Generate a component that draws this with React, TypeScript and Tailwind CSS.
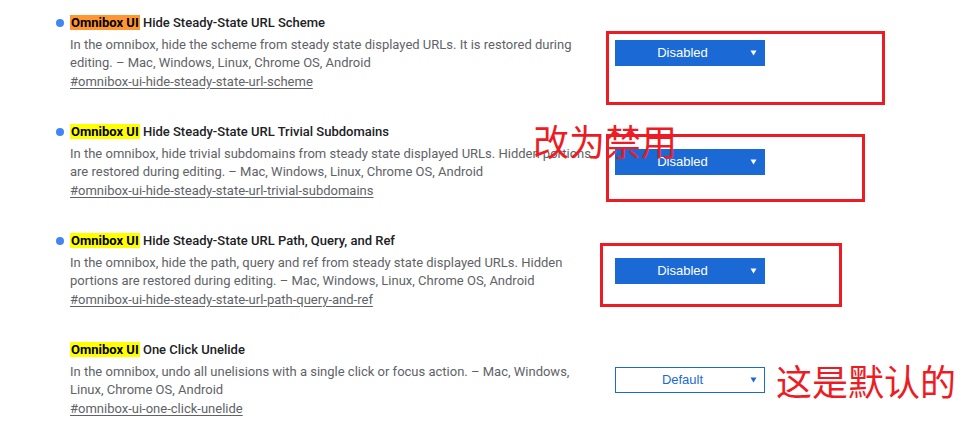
import React from 'react';

type Flag = {
  name: string;
  lines: string[];
  anchor: string;
  value: 'Disabled' | 'Default';
  modified: boolean;
  activeMatch?: boolean;
};

const flags: Flag[] = [
  {
    name: 'Hide Steady-State URL Scheme',
    lines: [
      'In the omnibox, hide the scheme from steady state displayed URLs. It is restored during',
      'editing. – Mac, Windows, Linux, Chrome OS, Android',
    ],
    anchor: '#omnibox-ui-hide-steady-state-url-scheme',
    value: 'Disabled',
    modified: true,
    activeMatch: true,
  },
  {
    name: 'Hide Steady-State URL Trivial Subdomains',
    lines: [
      'In the omnibox, hide trivial subdomains from steady state displayed URLs. Hidden portions',
      'are restored during editing. – Mac, Windows, Linux, Chrome OS, Android',
    ],
    anchor: '#omnibox-ui-hide-steady-state-url-trivial-subdomains',
    value: 'Disabled',
    modified: true,
  },
  {
    name: 'Hide Steady-State URL Path, Query, and Ref',
    lines: [
      'In the omnibox, hide the path, query and ref from steady state displayed URLs. Hidden',
      'portions are restored during editing. – Mac, Windows, Linux, Chrome OS, Android',
    ],
    anchor: '#omnibox-ui-hide-steady-state-url-path-query-and-ref',
    value: 'Disabled',
    modified: true,
  },
  {
    name: 'One Click Unelide',
    lines: [
      'In the omnibox, undo all unelisions with a single click or focus action. – Mac, Windows,',
      'Linux, Chrome OS, Android',
    ],
    anchor: '#omnibox-ui-one-click-unelide',
    value: 'Default',
    modified: false,
  },
];

const FlagSelect = ({ value }: { value: Flag['value'] }) => {
  const isSet = value !== 'Default';
  return (
    <div
      className={`mt-[26px] flex h-[26px] w-[150px] shrink-0 items-center border pl-2 pr-[7px] text-[13px] ${
        isSet ? 'border-[#1b69d4] bg-[#1b69d4] text-white' : 'border-[#1a6ad6] bg-white text-[#1a6ad6]'
      }`}
      style={{ fontFamily: '"Liberation Sans", Arial, sans-serif' }}
    >
      <span className="flex-1 text-center">{value}</span>
      <svg width="7" height="6" viewBox="0 0 7 6" className="ml-[9px]">
        <path d="M0.5 0.5h6L3.5 5.5z" fill={isSet ? '#ffffff' : '#1a6ad6'} />
      </svg>
    </div>
  );
};

const FlagRow = ({ flag }: { flag: Flag }) => (
  <div className="flex h-[109px]">
    <div className="flex w-[559px] shrink-0">
      <div className="flex h-[18px] w-[14px] shrink-0 items-center">
        {flag.modified && <div className="h-2 w-2 rounded-full bg-[#4285f4]" />}
      </div>
      <div className="flex flex-col">
        <div className="h-[18px] text-[13px] font-medium leading-[18px] text-[#202124]">
          <span className={`px-[1px] font-bold text-black ${flag.activeMatch ? 'bg-[#ff9632]' : 'bg-[#ffff00]'}`}>
            Omnibox UI
          </span>{' '}
          {flag.name}
        </div>
        <p className="mt-1 text-[13px] leading-[18px] text-[#5f6368]">
          {flag.lines.map((line) => (
            <span key={line} className="block whitespace-nowrap">
              {line}
            </span>
          ))}
        </p>
        <a className="mt-[1px] text-[13px] leading-[18px] text-[#5f6368] underline underline-offset-2">
          {flag.anchor}
        </a>
      </div>
    </div>
    <FlagSelect value={flag.value} />
  </div>
);

export default function App() {
  return (
    <div
      className="relative h-[427px] w-[977px] overflow-hidden bg-white pl-[56px] pt-[14px]"
      style={{ fontFamily: 'Roboto, "Noto Sans", sans-serif' }}
    >
      {flags.map((flag) => (
        <FlagRow key={flag.anchor} flag={flag} />
      ))}

      {/* red annotations drawn over the screenshot */}
      <div className="absolute left-[606px] top-[31px] h-[74px] w-[279px] border-[3px] border-[#ed1c24]" />
      <div className="absolute left-[606px] top-[134px] h-[68px] w-[259px] border-[3px] border-[#ed1c24]" />
      <div className="absolute left-[600px] top-[243px] h-[64px] w-[242px] border-[3px] border-[#ed1c24]" />
      <div
        className="absolute left-[533px] top-[116px] text-[36px] leading-[48px] text-[#ed1c24]"
        style={{ fontFamily: '"Noto Sans CJK SC", sans-serif' }}
      >
        改为禁用
      </div>
      <div
        className="absolute left-[776px] top-[356px] text-[36px] leading-[48px] text-[#ed1c24]"
        style={{ fontFamily: '"Noto Sans CJK SC", sans-serif' }}
      >
        这是默认的
      </div>
    </div>
  );
}
